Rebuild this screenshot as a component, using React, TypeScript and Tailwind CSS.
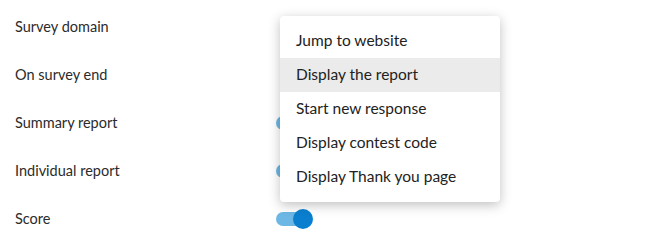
import React from "react";

const rows = [
  { label: "Survey domain", toggle: null },
  { label: "On survey end", toggle: null },
  { label: "Summary report", toggle: true },
  { label: "Individual report", toggle: true },
  { label: "Score", toggle: true },
];

const options = [
  "Jump to website",
  "Display the report",
  "Start new response",
  "Display contest code",
  "Display Thank you page",
];

function Toggle({ on }: { on: boolean }) {
  return (
    <div className="relative w-[34px] h-[14px] rounded-full bg-[#6db7e4]">
      <div
        className={
          on
            ? "absolute right-[-3px] top-[-3px] w-[20px] h-[20px] rounded-full bg-[#0a7fcf]"
            : "absolute left-[-3px] top-[-3px] w-[20px] h-[20px] rounded-full bg-[#0a7fcf]"
        }
      />
    </div>
  );
}

export default function App() {
  return (
    <div
      className="relative w-[650px] h-[250px] bg-white text-[#2b2b2b]"
      style={{ fontFamily: "Lato, 'Open Sans', sans-serif" }}
    >
      <div className="flex flex-col pt-[3px]">
        {rows.map((r) => (
          <div key={r.label} className="flex items-center h-12">
            <div className="w-[276px] pl-[15px] text-[14.5px]">{r.label}</div>
            {r.toggle && <Toggle on />}
          </div>
        ))}
      </div>

      {/* Dropdown menu */}
      <div className="absolute left-[280px] top-[16px] w-[220px] py-2 bg-white rounded-[4px] shadow-[0_3px_12px_rgba(0,0,0,0.25)]">
        {options.map((o, i) => (
          <div
            key={o}
            className={
              i === 1
                ? "h-[34px] flex items-center pl-4 text-[15.5px] text-[#222] bg-[#ebebeb]"
                : "h-[34px] flex items-center pl-4 text-[15.5px] text-[#222]"
            }
          >
            {o}
          </div>
        ))}
      </div>
    </div>
  );
}
